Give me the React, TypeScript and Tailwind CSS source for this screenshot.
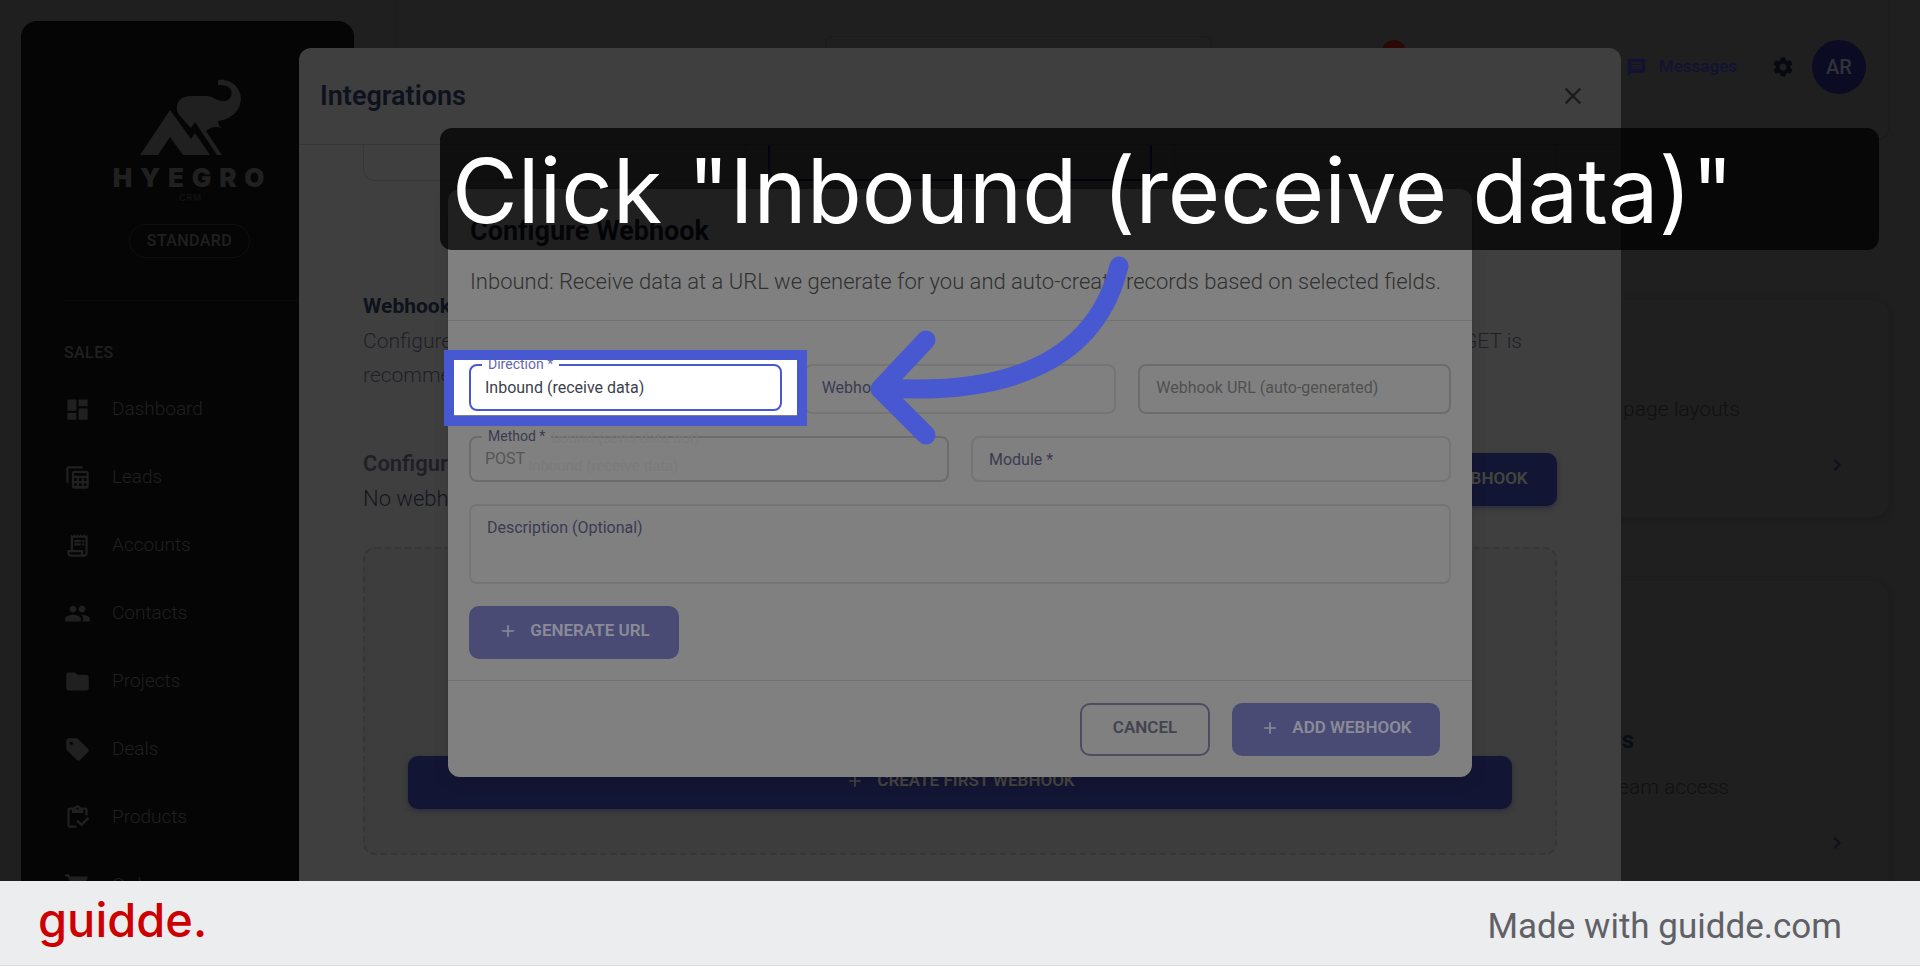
import type { ReactNode } from 'react';
import {
  MdAdd,
  MdChevronRight,
  MdClose,
  MdDashboard,
  MdFolder,
  MdMessage,
  MdOutlineInventory,
  MdOutlineReceiptLong,
  MdPeople,
  MdSell,
  MdSettings,
  MdShoppingCart,
} from 'react-icons/md';

function LeadsIcon() {
  return (
    <svg viewBox="0 0 24 24" className="size-[27px]" fill="currentColor">
      <path d="M4 2h11a2 2 0 0 1 2 2H4v13a2 2 0 0 1-2-2V4a2 2 0 0 1 2-2Z" />
      <path
        fillRule="evenodd"
        d="M9 6h11a2 2 0 0 1 2 2v12a2 2 0 0 1-2 2H9a2 2 0 0 1-2-2V8a2 2 0 0 1 2-2ZM9 8v2.5h11V8ZM9 12.5v2.5h2.4v-2.5ZM13.3 12.5v2.5h2.4v-2.5ZM17.6 12.5v2.5h2.4v-2.5ZM9 17v2.5h2.4v-2.5ZM13.3 17v2.5h2.4v-2.5ZM17.6 17v2.5h2.4v-2.5Z"
      />
    </svg>
  );
}

const navItems = [
  { label: 'Dashboard', icon: <MdDashboard size={27} /> },
  { label: 'Leads', icon: <LeadsIcon /> },
  { label: 'Accounts', icon: <MdOutlineReceiptLong size={27} /> },
  { label: 'Contacts', icon: <MdPeople size={27} /> },
  { label: 'Projects', icon: <MdFolder size={27} /> },
  { label: 'Deals', icon: <MdSell size={27} /> },
  { label: 'Products', icon: <MdOutlineInventory size={27} /> },
  { label: 'Orders', icon: <MdShoppingCart size={27} /> },
];

function Logo() {
  return (
    <svg viewBox="0 0 102 77" className="h-[77px] w-[102px]" fill="currentColor">
      <path d="M0 76 L30 31 L51 60 L55 54 L70 76 H43 L30 58 L18 76 Z" />
      <path d="M37 31 C36 22 42 17 51 17 H67 C73 17 76 22 83 22 C90 22 93 16 91 11 C89 7 84 6 78 6 V1 C91 -1 101 9 101 20 C100 32 92 40 78 42 Q78 47 82 49 Q73 46 66 52 L82 76 H77 L55 43 L51 49 L40 37 Q37 34 37 31 Z" />
    </svg>
  );
}

function Sidebar() {
  return (
    <aside className="mt-[21px] ml-[21px] flex w-[333px] shrink-0 flex-col rounded-t-2xl bg-[#050505] px-[43px] text-[#202020]">
      <div className="flex flex-col items-center pt-[58px] pl-[6px]">
        <Logo />
        <div className="mt-2 pl-1 font-[Inter] text-[26px] leading-7 font-black tracking-[0.3em]">HYEGRO</div>
        <div className="font-[Inter] text-[9px] leading-3 tracking-widest text-[#161616]">CRM</div>
      </div>
      <div className="mt-5 flex justify-center pl-1">
        <span className="rounded-full border border-[#0f0f0f] px-[17px] py-1 text-base font-medium tracking-wide">
          STANDARD
        </span>
      </div>
      <hr className="mt-[42px] border-[#0b0b0b]" />
      <h2 className="mt-10 text-base leading-6 font-medium tracking-wide">SALES</h2>
      <nav className="mt-[10px]">
        {navItems.map((item) => (
          <a key={item.label} href="#" className="flex h-[68px] items-center gap-[21px] text-[19px] font-light">
            {item.icon}
            {item.label}
          </a>
        ))}
      </nav>
    </aside>
  );
}

function TopBar() {
  return (
    <header className="relative flex h-[140px] shrink-0 items-start justify-end rounded-b-xl border border-t-0 border-[#1c1c1c] pt-10 pr-[22px]">
      <div className="absolute top-9 left-[429px] h-14 w-[387px] rounded-lg border border-[#1b1b1b]" />
      <div className="absolute top-10 left-[986px] size-6 rounded-full bg-[#2b0706]" />
      <div className="flex h-[54px] items-center">
        <button className="flex items-center gap-3 text-[17px] font-medium text-[#121233]">
          <MdMessage size={21} />
          Messages
        </button>
        <button aria-label="Settings" className="ml-[34px] text-[#06090f]">
          <MdSettings size={24} />
        </button>
        <button className="ml-[17px] size-[54px] rounded-full bg-[#0b0b24] text-xl font-medium text-[#32323a]">AR</button>
      </div>
    </header>
  );
}

function SettingsCard({ title, children, className }: { title?: string; children: ReactNode; className: string }) {
  return (
    <section className={`flex shrink-0 flex-col items-end rounded-2xl bg-[#1f1f1f] shadow-[0_2px_6px_#1a1a1a] ${className}`}>
      {title && <h3 className="pr-[255px] text-2xl leading-8 font-bold text-[#0b0d14]">{title}</h3>}
      {children}
      <MdChevronRight size={24} className="mt-7 mr-10 text-[#0f0f20]" />
    </section>
  );
}

function PrimaryButton({ children, faded, className = '' }: { children: ReactNode; faded?: boolean; className?: string }) {
  const look = faded
    ? 'bg-[#494b75] text-[#8b8b98]'
    : 'bg-[#131534] text-[#45453f] shadow-[0_2px_5px_#2a2b3a]';
  return (
    <button
      className={`flex h-[53px] items-center justify-center gap-3 rounded-[10px] pb-[3px] text-[17px] font-semibold ${look} ${className}`}
    >
      <MdAdd size={20} />
      {children}
    </button>
  );
}

function IntegrationsDialog() {
  return (
    <div className="absolute inset-x-8 top-12 bottom-0 mx-auto flex max-w-[1322px] flex-col rounded-t-xl bg-[#3f3f3f]">
      <div className="flex h-[97px] shrink-0 items-center justify-between border-b border-[#363636] pr-[34px] pl-[21px]">
        <h2 className="text-[27px] font-semibold text-[#0d121d]">Integrations</h2>
        <button aria-label="Close" className="text-[#1c1c1c]">
          <MdClose size={28} />
        </button>
      </div>
      <div className="px-16">
        <div className="grid grid-cols-3 gap-[22px]">
          <div className="h-9 rounded-b-xl border border-t-0 border-[#373737]" />
          <div className="h-9 rounded-b-xl border-2 border-t-0 border-[#0a1238]" />
          <div className="h-9 rounded-b-xl border border-t-0 border-[#373737]" />
        </div>
        <h3 className="mt-[107px] text-[21px] leading-9 font-bold text-[#0d121d]">Webhooks</h3>
        <div className="flex justify-between pr-[35px] text-[21px] leading-[34px] font-light text-[#1f2026]">
          <p>
            Configure
            <br />
            recommended
          </p>
          <p>GET is</p>
        </div>
        <div className="mt-[54px] flex items-start justify-between text-[22px] leading-[35px] text-[#1f2026]">
          <div>
            <h3 className="font-semibold">Configured</h3>
            <p className="font-light text-[#15161d]">No webhooks</p>
          </div>
          <PrimaryButton className="mt-[7px] w-[210px]">ADD WEBHOOK</PrimaryButton>
        </div>
        <div className="mt-[31px] flex h-[308px] flex-col justify-end rounded-xl border-2 border-dashed border-[#363636] bg-[#3d3d3d] px-[43px] pb-11">
          <PrimaryButton>CREATE FIRST WEBHOOK</PrimaryButton>
        </div>
      </div>
    </div>
  );
}

// Floating label that cuts the top border of an outlined field
const notchLabel = 'absolute -top-3 left-[13px] z-10 px-1.5 text-sm leading-6';
const restingLabel = 'absolute top-3 left-[18px] text-base leading-6';
const outlined = 'block w-full appearance-none rounded-lg border-2 bg-transparent px-4 text-base outline-none';

function WebhookForm() {
  return (
    <form className="flex flex-col gap-[22px] px-[21px] pt-[43px] pb-[21px]">
      <div className="grid grid-cols-3 gap-[22px]">
        <div className="relative">
          <div className="absolute -inset-x-[15px] -top-[5px] -bottom-[1px] bg-white" />
          <label htmlFor="direction" className={`${notchLabel} bg-white text-[#6668a8]`}>
            Direction *
          </label>
          <select id="direction" className={`${outlined} relative h-[47px] border-[#4858d0] pl-[14px] text-[#3c3f4c]`}>
            <option>Inbound (receive data)</option>
          </select>
          <div className="pointer-events-none absolute -inset-x-[25px] -top-[14px] -bottom-[12px] z-20 border-10 border-[#4858d0]" />
        </div>
        <div className="relative">
          <label htmlFor="name" className={`${restingLabel} text-[#3a3b50]`}>
            Webhook Name *
          </label>
          <input id="name" className={`${outlined} h-[50px] border-[#757575]`} />
        </div>
        <div className="relative">
          <label htmlFor="url" className={`${restingLabel} text-[#505050]`}>
            Webhook URL (auto-generated)
          </label>
          <input id="url" disabled className={`${outlined} h-[50px] border-[#6c6c6c]`} />
        </div>
      </div>
      <div className="grid grid-cols-2 gap-[22px]">
        <div className="relative">
          <label htmlFor="method" className={`${notchLabel} bg-[#808080] text-[#3a3b50]`}>
            Method *
          </label>
          <select
            id="method"
            disabled
            className={`${outlined} h-[46px] border-[#6c6c6c] pl-[14px] text-[#555555] opacity-100`}
          >
            <option>POST</option>
          </select>
          <ul className="absolute -top-3 left-[59px] font-['Liberation_Sans',sans-serif] text-[15px] leading-7 text-[#7b7b7b]">
            <li>Outbound (send data out)</li>
            <li>Inbound (receive data)</li>
          </ul>
        </div>
        <div className="relative">
          <label htmlFor="module" className={`${restingLabel} text-[#3a3b50]`}>
            Module *
          </label>
          <select id="module" className={`${outlined} h-[46px] border-[#757575]`} />
        </div>
      </div>
      <div className="relative">
        <label htmlFor="description" className={`${restingLabel} text-[#3a3b50]`}>
          Description (Optional)
        </label>
        <textarea id="description" className={`${outlined} h-20 resize-none border-[#757575]`} />
      </div>
      <PrimaryButton faded className="w-[210px]">
        GENERATE URL
      </PrimaryButton>
    </form>
  );
}

function WebhookDialog() {
  return (
    <div className="absolute inset-x-8 top-[189px] mx-auto max-w-[1024px] rounded-xl bg-[#808080] shadow-[0_4px_16px_rgba(0,0,0,0.12)]">
      <div className="border-b border-[#717171] px-[22px] pt-[22px] pb-[20px]">
        <h2 className="text-[27px] leading-10 font-bold text-[#10131c]">Configure Webhook</h2>
        <p className="mt-[13px] text-[22px] leading-9 font-light text-[#303030]">
          Inbound: Receive data at a URL we generate for you and auto-create records based on selected fields.
        </p>
      </div>
      <WebhookForm />
      <div className="flex justify-end gap-[22px] border-t border-[#717171] px-8 pt-[22px] pb-[21px]">
        <button className="h-[53px] w-[130px] rounded-[10px] border-2 border-[#4c4c62] pb-[3px] text-[17px] font-semibold text-[#434350]">
          CANCEL
        </button>
        <PrimaryButton faded className="w-[208px]">
          ADD WEBHOOK
        </PrimaryButton>
      </div>
    </div>
  );
}

function Arrow() {
  return (
    <svg
      viewBox="0 0 280 210"
      className="absolute top-[245px] left-[calc(50%-100px)] h-[210px] w-[280px]"
      fill="none"
      stroke="#4858d0"
      strokeLinecap="round"
      strokeLinejoin="round"
      strokeWidth="19"
    >
      <path d="M259 21 C237 112 155 151 24 143" />
      <path d="M66 95 L20 144 L66 190" />
    </svg>
  );
}

export default function App() {
  return (
    <div className="flex h-screen flex-col bg-[#1f1f1f] font-[Roboto,sans-serif]">
      <main className="relative flex min-h-0 flex-1 overflow-hidden">
        <Sidebar />
        <div className="flex flex-1 flex-col pr-[31px] pl-[41px]">
          <TopBar />
          <SettingsCard className="mt-[160px] h-[217px] pt-[93px]">
            <p className="pr-[149px] text-[21px] leading-8 font-light text-[#111113]">page layouts</p>
          </SettingsCard>
          <SettingsCard title="Users" className="mt-16 h-[400px] pt-[143px]">
            <p className="mt-[15px] pr-40 text-[21px] leading-8 font-light text-[#111113]">team access</p>
          </SettingsCard>
        </div>
        <IntegrationsDialog />
        <WebhookDialog />
        <div className="absolute top-32 right-[41px] left-[440px] flex h-[122px] items-center rounded-xl bg-black/75 px-3">
          <h1 className="pt-1 font-[Inter] text-[90px] leading-none whitespace-nowrap text-white">
            Click "Inbound (receive data)"
          </h1>
        </div>
        <Arrow />
      </main>
      <footer className="flex h-[85px] shrink-0 items-center justify-between border-b border-[#d9dbde] bg-[#ecedef] pr-[78px] pl-[38px]">
        <a href="#" className="pb-2 font-[Inter] text-[47px] leading-none font-medium text-[#cc0000]">
          guidde.
        </a>
        <p className="pt-2 text-[35px] text-[#5f6166]">Made with guidde.com</p>
      </footer>
    </div>
  );
}
